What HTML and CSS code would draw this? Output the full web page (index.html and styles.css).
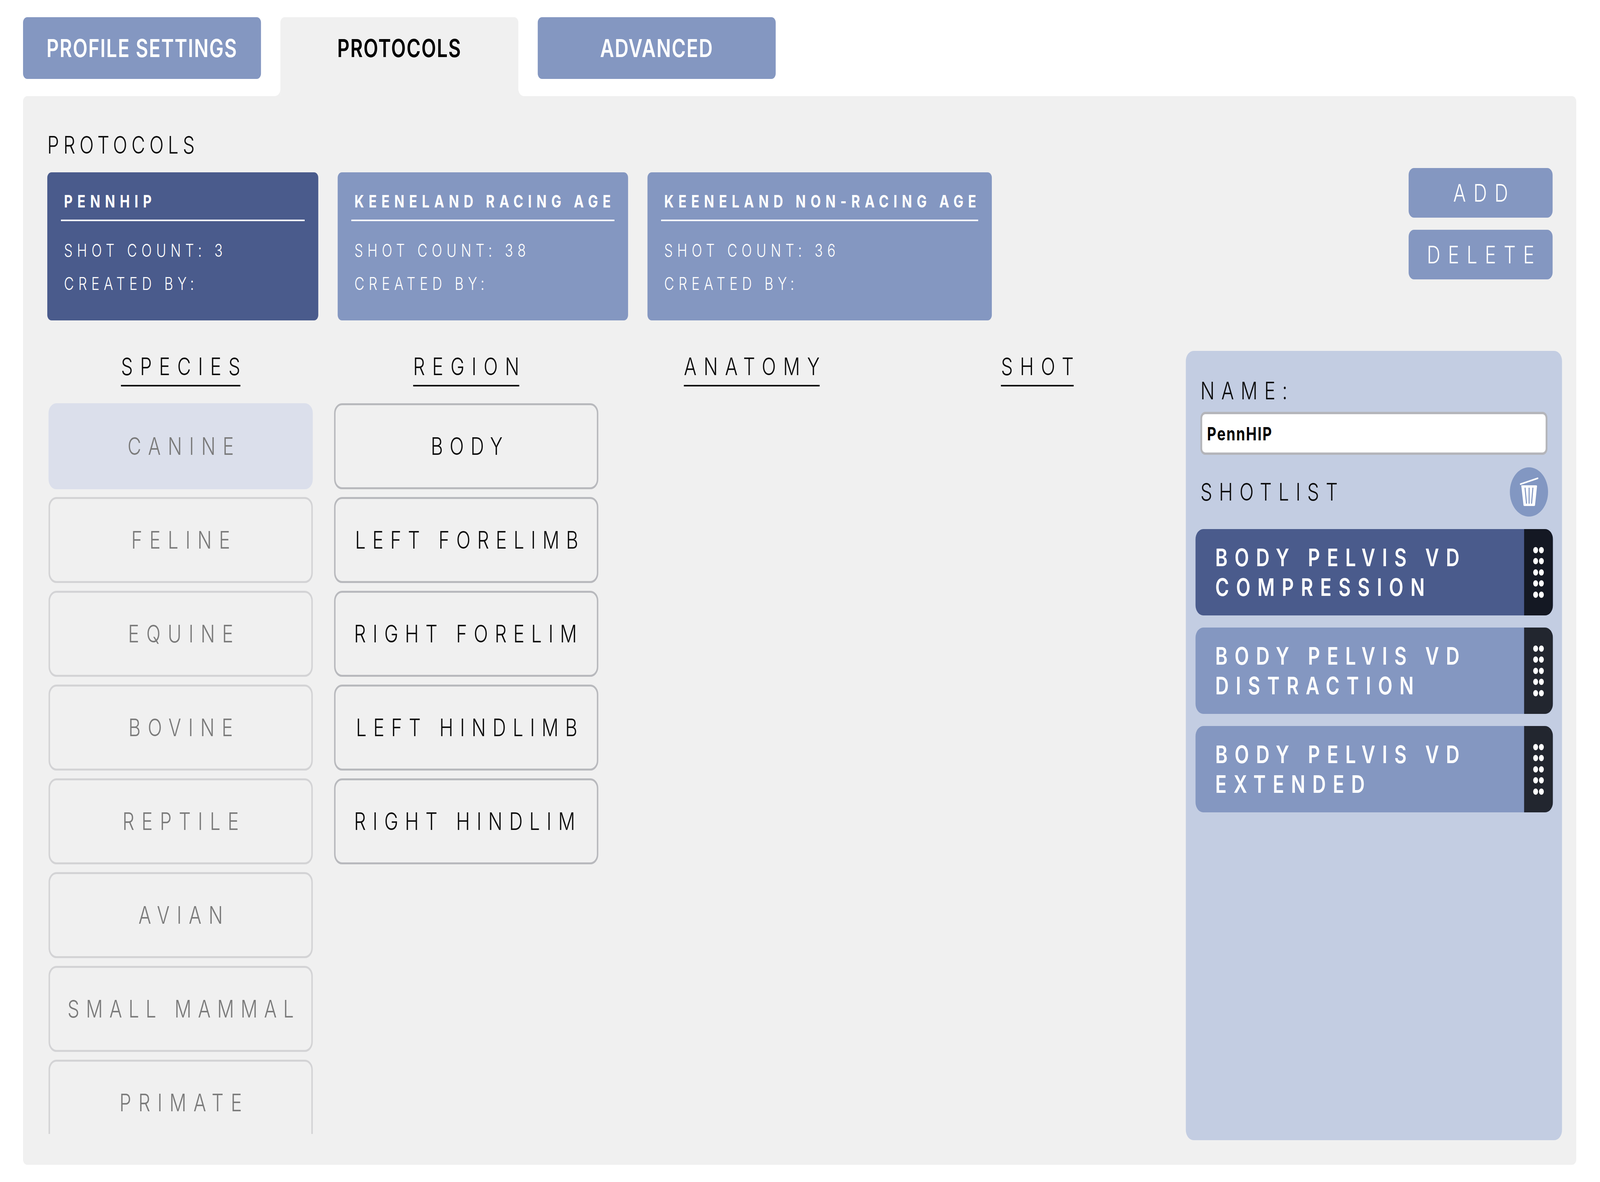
FILE: index.html
```html
<!DOCTYPE html>
<html lang="en">
<head>
<meta charset="utf-8">
<title>Protocols</title>
<link rel="stylesheet" href="styles.css">
</head>
<body>
<div class="page">
<nav class="tabs">
  <div class="tab tab-profile">PROFILE SETTINGS</div>
  <div class="tab tab-active">PROTOCOLS</div>
  <div class="tab tab-advanced">ADVANCED</div>
</nav>
<main class="panel">
  <section class="top">
    <div class="protocols">
      <h2 class="section-label">PROTOCOLS</h2>
      <div class="cards">
        <article class="card card-selected card-a">
          <h3 class="card-title">PENNHIP</h3>
          <p class="card-line">SHOT COUNT: 3</p>
          <p class="card-line">CREATED BY:</p>
        </article>
        <article class="card card-b">
          <h3 class="card-title">KEENELAND RACING AGE</h3>
          <p class="card-line">SHOT COUNT: 38</p>
          <p class="card-line">CREATED BY:</p>
        </article>
        <article class="card card-c">
          <h3 class="card-title">KEENELAND NON-RACING AGE</h3>
          <p class="card-line">SHOT COUNT: 36</p>
          <p class="card-line">CREATED BY:</p>
        </article>
      </div>
    </div>
    <div class="actions">
      <button class="action">ADD</button>
      <button class="action">DELETE</button>
    </div>
  </section>
  <section class="main">
    <div class="columns">
      <div class="column">
        <h3 class="col-title"><span>SPECIES</span></h3>
        <div class="list list-muted">
          <div class="pick pick-selected"><div class="pick-clip"><span>CANINE</span></div></div>
          <div class="pick"><div class="pick-clip"><span>FELINE</span></div></div>
          <div class="pick"><div class="pick-clip"><span>EQUINE</span></div></div>
          <div class="pick"><div class="pick-clip"><span>BOVINE</span></div></div>
          <div class="pick"><div class="pick-clip"><span>REPTILE</span></div></div>
          <div class="pick"><div class="pick-clip"><span>AVIAN</span></div></div>
          <div class="pick"><div class="pick-clip pick-long"><span>SMALL MAMMAL</span></div></div>
          <div class="pick"><div class="pick-clip"><span>PRIMATE</span></div></div>
        </div>
      </div>
      <div class="column">
        <h3 class="col-title"><span>REGION</span></h3>
        <div class="list">
          <div class="pick"><div class="pick-clip"><span>BODY</span></div></div>
          <div class="pick"><div class="pick-clip"><span>LEFT FORELIMB</span></div></div>
          <div class="pick"><div class="pick-clip"><span>RIGHT FORELIMB</span></div></div>
          <div class="pick"><div class="pick-clip"><span>LEFT HINDLIMB</span></div></div>
          <div class="pick"><div class="pick-clip"><span>RIGHT HINDLIMB</span></div></div>
        </div>
      </div>
      <div class="column">
        <h3 class="col-title"><span>ANATOMY</span></h3>
      </div>
      <div class="column">
        <h3 class="col-title"><span>SHOT</span></h3>
      </div>
    </div>
    <aside class="detail">
      <div class="detail-label">NAME:</div>
      <div class="name-input">PennHIP</div>
      <div class="shotlist-head">
        <div class="detail-label">SHOTLIST</div>
        <div class="trash">
          <svg viewBox="0 0 126 126" width="126" height="126">
            <path class="trash-lid" d="M35 43 L92 28"/>
            <path class="trash-can" d="M38 46 H87 Q90 46 89.500 49 L83 97 Q82.500 99 80 99 H48 Q45.500 99 45 97 L38 49 Q37.500 46 38 46 Z"/>
            <path class="trash-slot" d="M50 52 L55 93 M63.500 52 V93 M76 52 L71.500 93"/>
          </svg>
        </div>
      </div>
      <div class="shots">
        <div class="shot shot-selected">
          <div class="shot-text">BODY PELVIS VD COMPRESSION</div>
          <div class="handle"><i></i><i></i><i></i><i></i><i></i><i></i><i></i><i></i><i></i><i></i></div>
        </div>
        <div class="shot">
          <div class="shot-text">BODY PELVIS VD DISTRACTION</div>
          <div class="handle"><i></i><i></i><i></i><i></i><i></i><i></i><i></i><i></i><i></i><i></i></div>
        </div>
        <div class="shot">
          <div class="shot-text">BODY PELVIS VD EXTENDED</div>
          <div class="handle"><i></i><i></i><i></i><i></i><i></i><i></i><i></i><i></i><i></i><i></i></div>
        </div>
      </div>
    </aside>
  </section>
</main>
</div>
</body>
</html>
```
FILE: styles.css
```css
* { box-sizing: border-box; }
html, body { margin: 0; padding: 0; background: #fff; overflow: hidden; }
body {
  height: 3025px;
  font-family: Inter, "Liberation Sans", sans-serif;
  color: #0b0b0b;
}
h2, h3, p { margin: 0; font-weight: inherit; font-size: inherit; }

/* The layout is authored on the 5278px design width. Browsers here cap the
   window at 4096px wide, so the design width is fitted to what is available. */
.page {
  width: 5278px;
  height: 3025px;
  transform-origin: 0 0;
}
@media (max-width: 4096px) {
  .page { transform: scaleX(0.776); }
}

/* tabs */
.tabs {
  display: flex;
  align-items: flex-start;
  gap: 64px;
  height: 246px;
  padding: 44px 0 0 76px;
}
.tab {
  position: relative;
  display: flex;
  align-items: center;
  justify-content: center;
  width: 785px;
  height: 158px;
  border-radius: 14px;
  background: #8497c1;
  color: #fff;
  font-size: 63px;
  font-weight: 600;
  letter-spacing: 2.500px;
}
.tab-active {
  height: 202px;
  padding-bottom: 44px;
  border-radius: 14px 14px 0 0;
  background: #f0f0f0;
  color: #000;
}
.tab-active::before,
.tab-active::after {
  content: "";
  position: absolute;
  bottom: 0;
  width: 18px;
  height: 18px;
}
.tab-active::before {
  left: -18px;
  background: radial-gradient(circle at 0 0, #fff 17.500px, #f0f0f0 18px);
}
.tab-active::after {
  right: -18px;
  background: radial-gradient(circle at 100% 0, #fff 17.500px, #f0f0f0 18px);
}

/* panel */
.panel {
  width: 5124px;
  height: 2735px;
  margin-left: 76px;
  border-radius: 14px;
  background: #f0f0f0;
}
.top {
  display: flex;
  justify-content: space-between;
  height: 652px;
  padding: 90px 78px 0 80px;
}
.section-label {
  height: 70px;
  font-size: 62px;
  font-weight: 300;
  line-height: 70px;
  letter-spacing: 14px;
  margin-bottom: 35px;
}
.cards { display: flex; gap: 64px; }
.card {
  height: 379px;
  padding: 49px 45px 0;
  border-radius: 14px;
  background: #8497c1;
  color: #fff;
  white-space: nowrap;
}
.card-selected { background: #4a5b8c; }
.card-a { width: 894px; }
.card-b { width: 958px; }
.card-c { width: 1136px; }
.card-title {
  height: 76px;
  padding: 0 10px;
  margin-bottom: 32px;
  border-bottom: 4px solid #fff;
  font-size: 44px;
  font-weight: 700;
  line-height: 50px;
  letter-spacing: 15.500px;
}
.card-line {
  height: 85px;
  padding: 0 10px;
  font-size: 45px;
  font-weight: 300;
  line-height: 85px;
  letter-spacing: 14.500px;
}
.actions {
  display: flex;
  flex-direction: column;
  gap: 31px;
  padding-top: 94px;
}
.action {
  width: 475px;
  height: 127px;
  padding: 0 0 0 25px;
  border: 0;
  border-radius: 18px;
  background: #8497c1;
  color: #fff;
  font-family: inherit;
  font-size: 62px;
  font-weight: 300;
  letter-spacing: 25px;
}

/* main */
.main {
  display: flex;
  justify-content: space-between;
  height: 2020px;
  padding: 0 47px 0 84px;
}
.columns {
  display: grid;
  grid-template-columns: repeat(4, 872px);
  column-gap: 70px;
}
.col-title {
  height: 134px;
  padding-top: 5px;
  text-align: center;
  font-size: 62px;
  font-weight: 300;
  line-height: 70px;
  letter-spacing: 23.500px;
}
.col-title span {
  position: relative;
  display: inline-block;
  margin-right: -23.500px;
}
.col-title span::after {
  content: "";
  position: absolute;
  left: 0;
  right: 23.500px;
  bottom: -16px;
  height: 4px;
  background: #0b0b0b;
}
.list {
  display: flex;
  flex-direction: column;
  gap: 20px;
  height: 1870px;
  overflow: hidden;
}
.pick {
  flex: none;
  display: flex;
  align-items: center;
  height: 220px;
  padding: 0 58px 0 61px;
  border: 5px solid #b8b9bd;
  border-radius: 26px;
}
.pick-clip {
  flex: none;
  width: calc(100% + 22px);
  margin-right: -22px;
  padding-right: 22px;
  overflow: hidden;
  clip-path: inset(0 22px 0 0);
  white-space: nowrap;
  text-align: center;
  font-size: 62px;
  font-weight: 300;
  line-height: 84px;
  letter-spacing: 22px;
}
.pick-clip span {
  display: inline-block;
  margin-right: -22px;
}
.list-muted .pick { padding: 0 38px; border-color: #d3d3d5; color: #7a7a7a; }
.list-muted .pick-selected { border-color: #dbdfeb; background: #dbdfeb; }
.list-muted .pick-clip { letter-spacing: 23.500px; }
.list-muted .pick-clip span { margin-right: -23.500px; }
.list-muted .pick-long { letter-spacing: 21.500px; }
.list-muted .pick-long span { margin-right: -21.500px; }

/* detail */
.detail {
  width: 1241px;
  padding: 67px 48px 0;
  border-radius: 26px;
  background: #c3cde2;
}
.detail-label {
  height: 70px;
  font-size: 62px;
  font-weight: 300;
  line-height: 70px;
  letter-spacing: 22px;
}
.name-input {
  display: flex;
  align-items: center;
  height: 110px;
  margin-top: 19px;
  padding-left: 16px;
  border: 6px solid #b4b5ba;
  border-radius: 16px;
  background: #fff;
  color: #000;
  font-size: 47px;
  font-weight: 700;
  letter-spacing: 3px;
}
.shotlist-head {
  display: flex;
  align-items: center;
  justify-content: space-between;
  margin-top: 32px;
}
.trash {
  width: 126px;
  height: 126px;
  margin-right: -2px;
  border-radius: 50%;
  background: #8297c2;
}
.trash svg { display: block; }
.trash-lid { fill: none; stroke: #fff; stroke-width: 4; stroke-linecap: round; }
.trash-can { fill: #fff; }
.trash-slot { fill: none; stroke: #8297c2; stroke-width: 3.500; }
.shots {
  display: flex;
  flex-direction: column;
  gap: 31px;
  margin: 32px -18px 0 -16px;
}
.shot {
  display: flex;
  height: 221px;
  border-radius: 26px;
  overflow: hidden;
  background: #8497c1;
  color: #fff;
}
.shot-selected { background: #4a5b8c; }
.shot-text {
  flex: 1;
  align-self: center;
  padding-left: 65px;
  font-size: 62px;
  font-weight: 600;
  line-height: 76px;
  letter-spacing: 23px;
}
.handle {
  flex: none;
  display: grid;
  grid-template-columns: repeat(2, 16px);
  grid-auto-rows: 16px;
  justify-content: center;
  align-content: center;
  gap: 12.500px 3.500px;
  width: 95px;
  background: #22262f;
}
.shot-selected .handle { background: #141823; }
.handle i { border-radius: 50%; background: #fff; }
```
